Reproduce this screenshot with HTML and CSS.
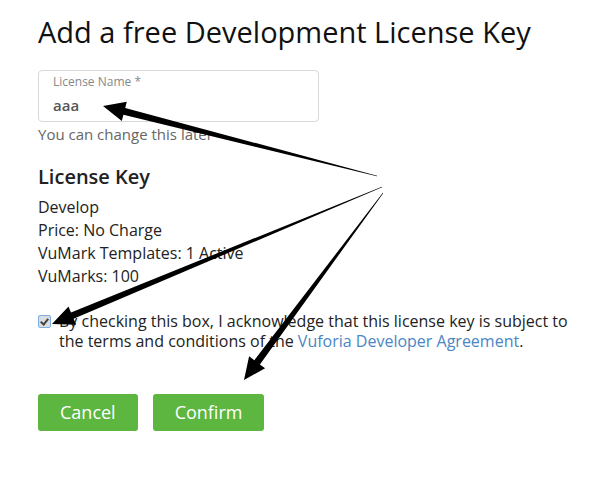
FILE: index.html
```html
<!DOCTYPE html>
<html lang="en">
<head>
    <meta charset="UTF-8">
    <meta name="viewport" content="width=device-width, initial-scale=1.0">
    <title>Add a free Development License Key</title>
    <link rel="stylesheet" href="styles.css">
</head>
<body>
    <div class="container">
        <h1>Add a free Development License Key</h1>

        <div class="field">
            <label class="field-label" for="license-name">License Name *</label>
            <input class="field-input" type="text" id="license-name" value="aaa">
        </div>
        <div class="help-text">You can change this later</div>

        <h3>License Key</h3>
        <div class="key-info">
            <div>Develop</div>
            <div>Price: No Charge</div>
            <div>VuMark Templates: 1 Active</div>
            <div>VuMarks: 100</div>
        </div>

        <div class="agree-row">
            <input type="checkbox" class="agree-check" id="agree" checked>
            <label for="agree">By checking this box, I acknowledge that this license key is subject to the terms and conditions of the <a href="#">Vuforia Developer Agreement</a>.</label>
        </div>

        <div class="actions">
            <button type="button" class="btn">Cancel</button>
            <button type="button" class="btn">Confirm</button>
        </div>
    </div>

    <!-- annotation arrows -->
    <svg class="arrows" width="606" height="492" viewBox="0 0 606 492">
        <polygon points="377.1,175.7 125.2,108 126.8,101.7 103,106 121.8,121.1 123.4,114.8 376.9,176.3"/>
        <polygon points="381.9,186.7 71,312.4 68.5,306.4 52,324 76.1,324.8 73.6,318.8 382.1,187.3"/>
        <polygon points="382.8,192.8 254.3,360.2 249.1,356.3 244,380 265.1,368.3 259.9,364.4 383.2,193.2"/>
    </svg>
</body>
</html>
```

FILE: styles.css
```css
body {
    font-family: "Open Sans", "Liberation Sans", sans-serif;
    margin: 0;
    color: #222;
    background: #fff;
    position: relative;
}
.container {
    padding: 12px 22px 0 38px;
}
h1 {
    font-size: 29px;
    font-weight: 400;
    line-height: 40px;
    color: #111;
    margin: 0 0 18px;
}
.field {
    width: 281px;
    box-sizing: border-box;
    border: 1px solid #d9d9d9;
    border-radius: 4px;
    padding: 3px 14px 6px;
}
.field-label {
    display: block;
    font-size: 12px;
    line-height: 16px;
    color: #888;
}
.field-input {
    display: block;
    width: 100%;
    margin-top: 5px;
    padding: 0;
    border: none;
    outline: none;
    font-family: inherit;
    font-size: 15px;
    font-weight: 600;
    line-height: 20px;
    height: 20px;
    color: #555;
}
.help-text {
    margin-top: 2px;
    font-size: 15px;
    line-height: 20px;
    color: #666;
}
h3 {
    font-size: 20px;
    font-weight: 600;
    line-height: 28px;
    margin: 19px 0 0;
}
.key-info {
    margin-top: 5px;
    font-size: 16px;
    line-height: 23px;
}
.agree-row {
    display: flex;
    align-items: flex-start;
    gap: 8px;
    margin-top: 23px;
    font-size: 16px;
    line-height: 20px;
}
.agree-check {
    appearance: none;
    -webkit-appearance: none;
    flex: none;
    width: 13px;
    height: 13px;
    margin: 4px 0 0;
    box-sizing: border-box;
    border: 1px solid #7eaee6;
    border-radius: 2px;
    background: #dcdcdc;
    position: relative;
}
.agree-check:checked::after {
    content: "";
    position: absolute;
    left: 3px;
    top: 1px;
    width: 3px;
    height: 6px;
    border: solid #444;
    border-width: 0 2px 2px 0;
    transform: rotate(40deg);
}
.agree-row a {
    color: #4a86c4;
    text-decoration: none;
}
.actions {
    display: flex;
    gap: 15px;
    margin-top: 43px;
}
.btn {
    height: 37px;
    padding: 0 22px;
    background-color: #5cb63f;
    color: #fff;
    font-family: inherit;
    font-size: 18px;
    line-height: 37px;
    border: none;
    border-radius: 3px;
    cursor: pointer;
}
.arrows {
    position: absolute;
    top: 0;
    left: 0;
    pointer-events: none;
}
.arrows polygon {
    fill: #000;
}
```
